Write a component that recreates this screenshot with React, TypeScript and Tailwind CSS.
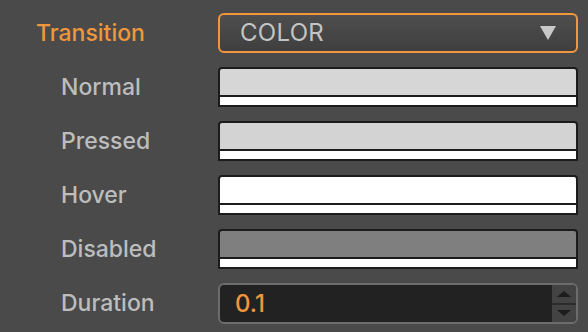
import React from 'react';

const font = { fontFamily: 'Inter, "Liberation Sans", sans-serif' };

const Swatch = ({ color }: { color: string }) => (
  <div className="h-[40px] w-full rounded-t-[4px] border-2 border-[#1c1c1c] bg-[#1c1c1c] flex flex-col gap-[2px]">
    <div className={`h-[26px] rounded-t-[2px] ${color}`} />
    <div className="flex-1 bg-white" />
  </div>
);

const Label = ({ text, accent }: { text: string; accent?: boolean }) => (
  <div
    className={
      accent
        ? 'pl-[36px] text-[23px] font-medium text-[#f0963c]'
        : 'pl-[61px] text-[23px] font-medium text-[#bdbdbd]'
    }
  >
    {text}
  </div>
);

export default function App() {
  return (
    <div className="w-[588px] h-[332px] bg-[#4a4a4a] overflow-hidden pt-[13px]" style={font}>
      <div className="grid grid-cols-[218px_360px] gap-y-[14px] items-center">
        <Label text="Transition" accent />
        <div className="h-[40px] rounded-[6px] border-2 border-[#f0963c] bg-gradient-to-b from-[#4e4e4e] to-[#3f3f3f] flex items-center justify-between pl-[20px] pr-[20px]">
          <span className="text-[24px] text-[#c4c4c4] tracking-[0.3px]">COLOR</span>
          <svg width="16" height="14" viewBox="0 0 16 14">
            <polygon points="0,0 16,0 8,14" fill="#c8c8c8" />
          </svg>
        </div>

        <Label text="Normal" />
        <Swatch color="bg-[#d6d6d6]" />

        <Label text="Pressed" />
        <Swatch color="bg-[#d3d3d3]" />

        <Label text="Hover" />
        <Swatch color="bg-white" />

        <Label text="Disabled" />
        <Swatch color="bg-[#7f7f7f]" />

        <Label text="Duration" />
        <div className="h-[41px] rounded-[6px] border-2 border-[#6c6c6c] bg-[#222222] flex overflow-hidden">
          <div className="flex-1 flex items-center pl-[15px] text-[24px] font-medium text-[#f0963c]">0.1</div>
          <div className="w-[24px] bg-[#434343] flex flex-col">
            <div className="flex-1 flex items-center justify-center">
              <svg width="14" height="6" viewBox="0 0 14 6">
                <polygon points="7,0 14,6 0,6" fill="#1c1c1c" />
              </svg>
            </div>
            <div className="h-[2px] bg-[#2c2c2c]" />
            <div className="flex-1 flex items-center justify-center">
              <svg width="14" height="6" viewBox="0 0 14 6">
                <polygon points="0,0 14,0 7,6" fill="#1c1c1c" />
              </svg>
            </div>
          </div>
        </div>
      </div>
    </div>
  );
}
